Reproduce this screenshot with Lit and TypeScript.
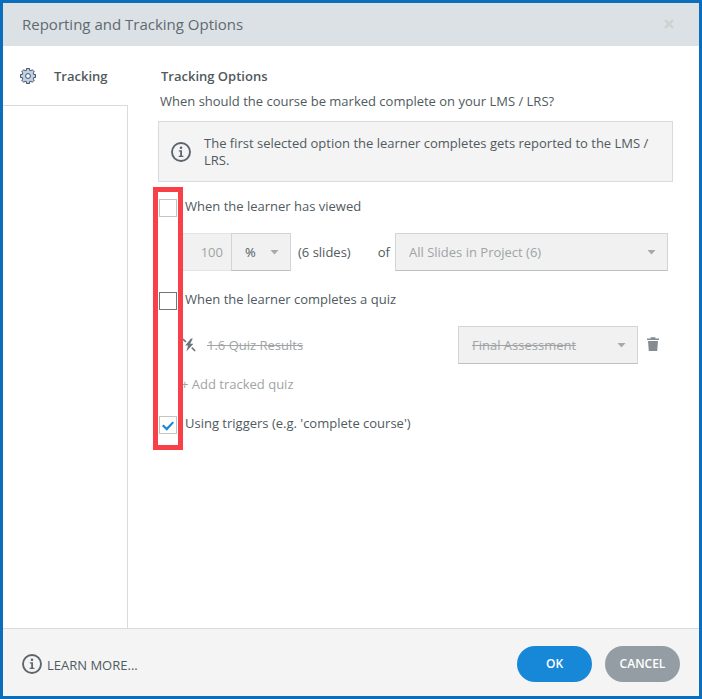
import { LitElement, html, css } from "lit";
import { customElement, property } from "lit/decorators.js";

const infoIcon = html`<svg class="info-icon" viewBox="0 0 20 20" width="20" height="20" aria-hidden="true">
  <circle cx="10" cy="10" r="9" fill="none" stroke="#5b656b" stroke-width="1.9" />
  <circle cx="10" cy="5.8" r="1.3" fill="#5b656b" />
  <path d="M7.8 8.3H11V13.7H12.4V14.9H7.7V13.7H9.2V9.5H7.8Z" fill="#5b656b" />
</svg>`;

/* Outline of an eight-toothed gear centred on the origin. */
const gearPath = (() => {
  const points: string[] = [];
  for (let i = 0; i < 8; i++) {
    for (const [radius, offset] of [[5.9, -15], [7.6, -12], [7.6, 12], [5.9, 15]]) {
      const angle = ((i * 45 + offset) * Math.PI) / 180;
      points.push(`${(radius * Math.cos(angle)).toFixed(2)} ${(radius * Math.sin(angle)).toFixed(2)}`);
    }
  }
  return `M${points.join("L")}Z`;
})();

@customElement("option-select")
class OptionSelect extends LitElement {
  @property() label = "";
  @property() value = "";
  @property({ type: Boolean, reflect: true }) inactive = false;
  @property({ type: Boolean, reflect: true }) struck = false;

  static styles = css`
    :host {
      display: block;
      position: relative;
    }
    .select {
      appearance: none;
      display: block;
      box-sizing: border-box;
      width: 100%;
      height: 38px;
      margin: 0;
      padding: 0 28px 0 13px;
      border: 1px solid #d0d5d8;
      border-bottom-color: #bcc1c4;
      border-radius: 0;
      background: #f1f1f1;
      color: #505a60;
      font: inherit;
      opacity: 1;
    }
    :host([inactive]) .select {
      color: #a0a4a6;
    }
    :host([struck]) .select {
      text-decoration: line-through;
    }
    .arrow {
      position: absolute;
      right: 12px;
      top: 17px;
      pointer-events: none;
    }
  `;

  render() {
    return html`<select class="select" aria-label=${this.label} ?disabled=${this.inactive}>
        <option>${this.value}</option>
      </select>
      <svg class="arrow" width="9" height="5" viewBox="0 0 9 5" aria-hidden="true">
        <path d="M0.5 0H8.5L4.5 4.5Z" fill="#a6a9ab" />
      </svg>`;
  }
}

@customElement("app-root")
class AppRoot extends LitElement {
  static styles = css`
    :host {
      display: block;
      font-family: "Open Sans", "Noto Sans", sans-serif;
      font-size: 13px;
      line-height: 17px;
      color: #505a60;
    }
    .dialog {
      box-sizing: border-box;
      min-height: 100vh;
      display: flex;
      flex-direction: column;
      border: 3px solid #0a6ebd;
      background: #fff;
    }
    .header {
      display: flex;
      align-items: center;
      justify-content: space-between;
      height: 43px;
      padding: 0 24px 0 19px;
      background: #dce1e5;
    }
    .title {
      margin: 0;
      font-size: 15px;
      font-weight: 400;
      color: #5f6a71;
    }
    button {
      font: inherit;
      color: inherit;
      margin: 0;
      padding: 0;
      border: 0;
      background: none;
    }
    .close {
      display: flex;
    }
    .body {
      flex: 1;
      display: grid;
      grid-template-columns: 125px minmax(0, 1fr);
    }
    .sidebar {
      display: flex;
      flex-direction: column;
    }
    .tab {
      display: flex;
      align-items: center;
      gap: 18px;
      height: 59px;
      padding: 1px 0 0 17px;
      font-weight: 600;
    }
    .rail {
      flex: 1;
      border-top: 1px solid #d5dde1;
      border-right: 1px solid #d5dde1;
    }
    .main {
      padding: 22px 26px 24px 30px;
    }
    .heading {
      margin: 0 0 8px 3px;
      font-size: 13px;
      font-weight: 600;
    }
    .question {
      margin: 0 0 11px 2px;
    }
    .notice {
      display: flex;
      align-items: center;
      gap: 13px;
      padding: 13px 16px 12px 12px;
      border: 1px solid #d5dbde;
      background: #f4f4f4;
    }
    .notice p {
      margin: 0;
    }
    .info-icon,
    .icon {
      flex: none;
      display: block;
    }
    .options {
      position: relative;
      margin: 15px 0 0;
      padding: 0 5px 16px 0;
    }
    .highlight {
      position: absolute;
      inset: -10px auto 0 -5px;
      width: 30px;
      box-sizing: border-box;
      border: 5px solid #f84048;
      pointer-events: none;
    }
    .choice {
      display: flex;
      align-items: center;
      gap: 8px;
      height: 20px;
      padding-left: 1px;
    }
    .choice label {
      padding-bottom: 2px;
    }
    .check {
      appearance: none;
      flex: none;
      box-sizing: border-box;
      width: 18px;
      height: 18px;
      margin: 2px 0 0;
      border: 1px solid #c4c4c0;
      background: #fff;
      display: grid;
      place-items: center;
    }
    .check.strong {
      border-color: #70777b;
    }
    .check:checked::before {
      content: "";
      width: 12px;
      height: 10px;
      margin-top: 2px;
      background: #1b87d2;
      clip-path: polygon(0 50%, 14% 36%, 38% 66%, 88% 4%, 100% 18%, 40% 98%);
    }
    .row {
      display: flex;
      align-items: center;
      height: 38px;
      margin: 16px 0 19px;
      padding-left: 25px;
    }
    .amount {
      box-sizing: border-box;
      width: 48px;
      height: 38px;
      margin: 0;
      padding: 0 8px;
      border: 0 solid #e2e5e7;
      border-width: 1px 0;
      border-radius: 0;
      background: #f1f1f1;
      color: #a0a4a6;
      font: inherit;
      text-align: right;
    }
    .unit {
      width: 60px;
      margin-right: 7px;
    }
    .of {
      margin: 0 5px 0 auto;
    }
    .scope {
      width: 273px;
    }
    .quiz {
      margin: 16px 0 12px;
      gap: 11px;
    }
    .quiz-name {
      flex: 1;
      color: #a0a4a6;
    }
    .assessment {
      width: 180px;
    }
    .trash {
      display: flex;
      margin: 0 9px 0 -2px;
      padding-bottom: 2px;
    }
    .add {
      display: block;
      margin: 0 0 21px 23px;
      color: #a0a4a6;
    }
    .footer {
      display: flex;
      align-items: center;
      gap: 13px;
      box-sizing: border-box;
      height: 68px;
      padding: 2px 19px 0 19px;
      border-top: 1px solid #d5dde1;
      background: #f4f4f4;
    }
    .learn {
      display: flex;
      align-items: center;
      gap: 5px;
      margin-right: auto;
      color: inherit;
      text-decoration: none;
    }
    .learn span {
      padding-top: 3px;
    }
    .pill {
      width: 75px;
      height: 36px;
      border-radius: 18px;
      background: #949da4;
      color: #fff;
      font-size: 12px;
      font-weight: 600;
    }
    .pill.primary {
      background: #1787d8;
    }
  `;

  render() {
    return html`<div class="dialog" role="dialog" aria-labelledby="title">
      <header class="header">
        <h1 class="title" id="title">Reporting and Tracking Options</h1>
        <button class="close" aria-label="Close">
          <svg class="icon" width="12" height="12" viewBox="0 0 12 12" aria-hidden="true">
            <path d="M2 1L10 9M10 1L2 9" stroke="#cdd1d1" stroke-width="2.4" />
          </svg>
        </button>
      </header>
      <div class="body">
        <nav class="sidebar">
          <button class="tab">
            <svg class="icon" width="16" height="16" viewBox="-8 -8 16 16" aria-hidden="true">
              <path d=${gearPath} fill="#c3d1e6" stroke="#3c4c66" stroke-width="1" stroke-linejoin="round" />
              <circle r="2.4" fill="#fff" stroke="#3c4c66" stroke-width="1" />
            </svg>
            Tracking
          </button>
          <div class="rail"></div>
        </nav>
        <main class="main">
          <h2 class="heading">Tracking Options</h2>
          <p class="question">When should the course be marked complete on your LMS / LRS?</p>
          <div class="notice">
            ${infoIcon}
            <p>The first selected option the learner completes gets reported to the LMS / LRS.</p>
          </div>
          <div class="options">
            <div class="choice">
              <input class="check" type="checkbox" id="viewed" />
              <label for="viewed">When the learner has viewed</label>
            </div>
            <div class="row">
              <input class="amount" type="text" value="100" aria-label="Amount viewed" disabled />
              <option-select class="unit" label="Unit" value="%"></option-select>
              <span>(6 slides)</span>
              <span class="of">of</span>
              <option-select class="scope" label="Slides to count" value="All Slides in Project (6)" inactive></option-select>
            </div>
            <div class="choice">
              <input class="check strong" type="checkbox" id="quiz" />
              <label for="quiz">When the learner completes a quiz</label>
            </div>
            <div class="row quiz">
              <svg class="icon" width="13" height="14" viewBox="0 0 13 14" aria-hidden="true">
                <path d="M8 0.5L2.2 7.6H5L3.4 13.4L10.4 5.8H7.2L9.8 0.5Z" fill="#6b767c" />
                <path d="M0 1L3 4M8.8 9.6L12.2 13" stroke="#6b767c" stroke-width="1.6" />
              </svg>
              <s class="quiz-name">1.6 Quiz Results</s>
              <option-select class="assessment" label="Assessment" value="Final Assessment" inactive struck></option-select>
              <button class="trash" aria-label="Remove quiz">
                <svg class="icon" width="12" height="14" viewBox="0 0 12 14" aria-hidden="true">
                  <path d="M0 1.6H3.6V0.2H8.4V1.6H12V3H0Z" fill="#838c91" />
                  <path d="M1 4H11L10.2 14H1.8Z" fill="#838c91" />
                </svg>
              </button>
            </div>
            <button class="add">+ Add tracked quiz</button>
            <div class="choice">
              <input class="check" type="checkbox" id="triggers" checked />
              <label for="triggers">Using triggers (e.g. 'complete course')</label>
            </div>
            <div class="highlight"></div>
          </div>
        </main>
      </div>
      <footer class="footer">
        <a class="learn" href="#learn-more">${infoIcon}<span>LEARN MORE...</span></a>
        <button class="pill primary">OK</button>
        <button class="pill">CANCEL</button>
      </footer>
    </div>`;
  }
}
